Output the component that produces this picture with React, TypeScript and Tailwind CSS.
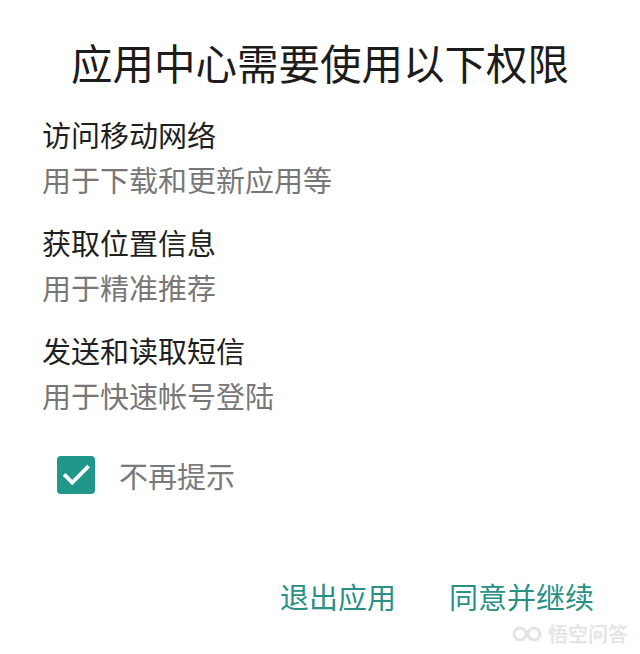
import React from "react";

const items = [
  { t: "访问移动网络", s: "用于下载和更新应用等" },
  { t: "获取位置信息", s: "用于精准推荐" },
  { t: "发送和读取短信", s: "用于快速帐号登陆" },
];

export default function App() {
  return (
    <div
      className="relative w-[640px] h-[654px] bg-white overflow-hidden"
      style={{ fontFamily: '"Noto Sans CJK SC", "Noto Sans", sans-serif' }}
    >
      <div className="pt-[38px] text-center text-[41.5px] leading-[48px] text-[#1c1c1c]">
        应用中心需要使用以下权限
      </div>
      <div className="mt-[28px] pl-[42px] flex flex-col gap-[23px]">
        {items.map((it) => (
          <div key={it.t} className="flex flex-col gap-[5px]">
            <div className="text-[29px] leading-[40px] text-[#1f1f1f]">{it.t}</div>
            <div className="text-[29px] leading-[40px] text-[#777777]">{it.s}</div>
          </div>
        ))}
      </div>
      <div className="mt-[40px] pl-[57px] flex items-center gap-[24px]">
        <div className="w-[38px] h-[38px] rounded-[4px] bg-[#21968a] flex items-center justify-center">
          <svg width="30" height="30" viewBox="0 0 24 24" fill="none">
            <path d="M3.5 12.5l5.5 5.5L21 6" stroke="white" strokeWidth="3" strokeLinecap="square" />
          </svg>
        </div>
        <div className="text-[29px] leading-[40px] text-[#7a7a7a]">不再提示</div>
      </div>
      <div className="mt-[81px] flex justify-end gap-[53px] pr-[46px]">
        <div className="text-[29px] leading-[40px] text-[#2a9086]">退出应用</div>
        <div className="text-[29px] leading-[40px] text-[#2a9086]">同意并继续</div>
      </div>
      <div className="absolute right-[12px] bottom-[9px] flex items-center gap-[6px] text-[#e6e6e6]">
        <svg width="30" height="16" viewBox="0 0 30 16" fill="none">
          <circle cx="8" cy="8" r="6" stroke="#e4e4e4" strokeWidth="3" />
          <circle cx="22" cy="8" r="6" stroke="#e4e4e4" strokeWidth="3" />
        </svg>
        <span className="text-[20px] leading-[22px] font-bold">悟空问答</span>
      </div>
    </div>
  );
}
